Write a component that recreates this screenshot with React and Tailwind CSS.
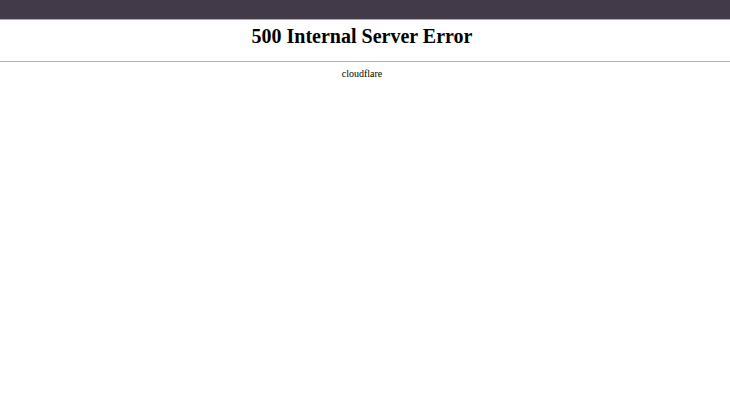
export default function App() {
  return (
    <div className="min-h-screen bg-white font-['Liberation_Serif',serif] text-black">
      <div className="h-5 border-b border-[#b0acb2] bg-[#423a48]" />
      <main className="pr-[6px] text-center">
        <h1 className="pt-[3px] text-[20px] leading-[26px] font-bold">500 Internal Server Error</h1>
      </main>
      <hr className="mt-3 border-t border-[#b2b2b2]" />
      <p className="pt-1 pr-[6px] text-center text-[10px] leading-4">cloudflare</p>
    </div>
  );
}
